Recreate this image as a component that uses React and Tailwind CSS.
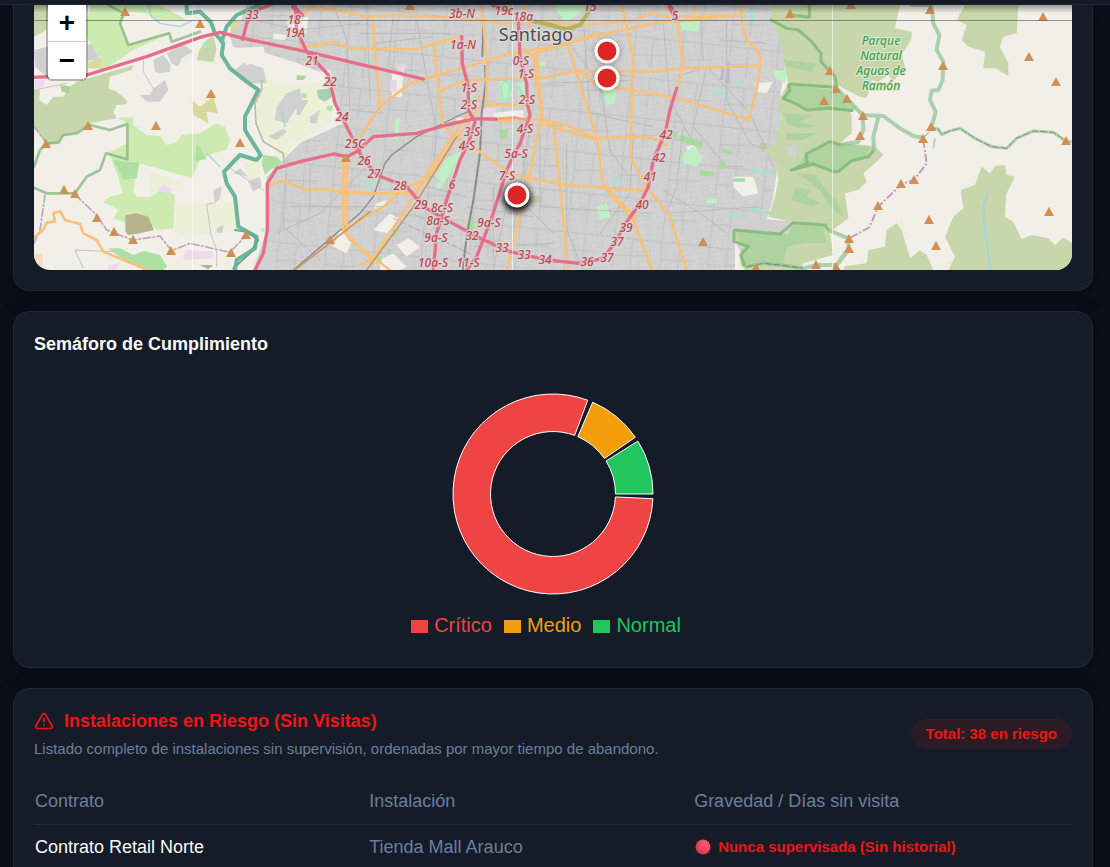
import { TriangleAlert } from "lucide-react";

const SLICES = [
  { name: "Normal", color: "#22c55e", from: 0, to: 31.9 },
  { name: "Medio", color: "#f59e0b", from: 34.6, to: 66.6 },
  { name: "Crítico", color: "#ef4444", from: 69.7, to: 357.3 },
];

const LEGEND = [
  { name: "Crítico", text: "text-[#ef4444]", box: "bg-[#ef4444]" },
  { name: "Medio", text: "text-[#f59e0b]", box: "bg-[#f59e0b]" },
  { name: "Normal", text: "text-[#22c55e]", box: "bg-[#22c55e]" },
];

const ROWS = [
  { contrato: "Contrato Retail Norte", instalacion: "Tienda Mall Arauco", gravedad: "Nunca supervisada (Sin historial)" },
];

// Motorway exit numbers: [text, x, y]
const EXITS = [
  ["33", 252, 15], ["18", 294, 20], ["19A", 295, 33], ["21", 312, 61], ["22", 330, 82],
  ["24", 342, 117], ["25C", 355, 144], ["26", 364, 161], ["27", 374, 174], ["28", 400, 186],
  ["29", 421, 205], ["8c-S", 442, 208], ["8a-S", 438, 221], ["9a-S", 436, 238], ["10a-S", 433, 263],
  ["11-S", 468, 263], ["32", 472, 236], ["9a-S", 489, 223], ["33", 502, 248], ["33", 524, 255],
  ["34", 545, 260], ["36", 587, 262], ["37", 607, 258], ["37", 617, 242], ["39", 626, 228],
  ["40", 642, 205], ["41", 650, 177], ["42", 659, 158], ["42", 666, 135], ["5", 675, 16],
  ["3b-N", 462, 14], ["1a-N", 463, 45], ["1-S", 469, 88], ["2-S", 469, 105], ["3-S", 472, 132],
  ["4-S", 467, 146], ["6", 452, 185], ["7-S", 507, 176], ["5a-S", 516, 154], ["4-S", 525, 129],
  ["2-S", 527, 100], ["1-S", 526, 74], ["0-S", 521, 61], ["18a", 523, 17], ["19c", 504, 11], ["15", 590, 7],
];

// Mountain peaks
const PEAKS = [
  [125, 12], [200, 24], [211, 94], [156, 126], [88, 126], [46, 144], [240, 143], [64, 190], [75, 194],
  [97, 218], [114, 232], [133, 240], [171, 251], [231, 253], [246, 235], [346, 158], [330, 240],
  [410, 6], [703, 242], [790, 14], [851, 5], [830, 71], [836, 89], [824, 101], [847, 99], [863, 116],
  [860, 136], [930, 10], [943, 66], [931, 127], [923, 139], [901, 184], [914, 180], [878, 206],
  [849, 239], [849, 249], [816, 265], [836, 267], [756, 268], [929, 220], [936, 246], [1043, 17],
  [1029, 57], [1056, 82], [1066, 141], [1049, 212],
];

const PINS = [
  [607, 51],
  [607, 78],
  [517, 195],
];

function point(radius, deg) {
  const a = (deg * Math.PI) / 180;
  return `${101 + radius * Math.cos(a)} ${101 - radius * Math.sin(a)}`;
}

function slicePath({ from, to }) {
  const large = to - from > 180 ? 1 : 0;
  return `M${point(100, from)} A100 100 0 ${large} 0 ${point(100, to)} L${point(62.5, to)} A62.5 62.5 0 ${large} 1 ${point(62.5, from)} Z`;
}

function LandWest() {
  return (
    <g>
      {/* woods and fields */}
      <path fill="#c8d7ab" d="M102 15H145L140 90L102 110Z M102 270L120 270L118 300L140 315L160 290L190 290L210 260L230 245L300 225L400 195L395 210L330 230L325 265L350 275L380 300L380 312L350 315L340 335L350 355L270 370L230 400L190 405L170 430L140 435L102 375Z" />
      <path fill="#c8d7ab" d="M590 180L598 150L620 120L640 105L650 150L640 187Z M690 100L700 60L740 65L735 100L715 128Z" />
      <path fill="#cdebb0" d="M250 90L275 15H480L560 60L540 85L510 100L400 150L320 205L298 208L275 140Z" />
      <path fill="#f2efe9" d="M372 45L395 35L440 40L470 60L560 60L585 80L560 110L510 120L505 95L385 135L362 70Z" />
      <path fill="#cdebb0" d="M350 353L400 352L400 375L440 405L480 408L500 435L530 425L545 405L600 400L650 370L675 380L690 420L680 450L640 460L600 480L575 535L545 525L400 485L340 482L320 460L382 430V370Z" />
      <path fill="#cdebb0" d="M335 480L415 490L400 575L410 590L450 592L470 575L500 570L525 585L520 685L470 690L430 645L380 640V670L340 655L355 630L310 605L330 590L370 580L350 520Z" />
      <path fill="#aedfa3" d="M340 480L418 488L410 535L370 540Z M590 430L600 440L620 478L585 482Z M325 745L360 745L400 765L430 753L480 765L502 800L490 810H430L370 780Z M785 270L815 265L825 305L795 310Z M790 465L830 470L850 490L810 510L795 525L785 490Z" />
      <path fill="#b5b38d" d="M376 645L410 640L445 650L462 690L420 700L385 705L376 695Z M600 795H640L625 808Z" />
      <path fill="#d8d99b" d="M575 300L600 320L640 290L655 340L620 335L625 370L580 345Z M265 185L310 178L295 205L265 205Z M690 75L735 68L730 105L700 125Z" />
      <path fill="#ecf0d6" d="M450 515L550 545L545 560L490 555L470 580L450 590Z M530 608L700 610L710 690L640 700L560 705L525 690Z M790 230L850 255L960 250L1000 330L990 370L880 430L850 480L810 430L770 390L770 300Z M730 490L790 460L780 530L750 545Z M760 790L800 740L850 790L850 810H760Z" />
      <path fill="#efd9ea" d="M555 750L640 755L635 775L550 780Z M325 795L360 790L350 810H325Z M470 570L490 555L520 570L500 580Z M105 240L135 240L130 262L105 265Z" />
      <path fill="#f8dcc0" d="M102 763H127V810H102Z" />
      <path fill="#9ccc85" opacity="0.8" d="M180 255L210 258L205 280L185 275Z M890 225L920 228L910 240H890Z" />

      {/* towns */}
      <path fill="#d0d0d0" d="M102 150L145 140V235L105 200Z M262 135L275 130L298 180L262 182Z M460 180L490 165L510 190L510 215L480 220L465 215Z M500 160L545 130L580 155L545 175L535 200L515 190Z M420 285L450 285L460 265L495 240L505 270L480 305L440 305Z M640 570L665 560L660 595L645 610Z M650 685L670 675L668 698H650Z M735 185L790 205L800 250L750 250L700 215Z" />
      <path fill="#d0d0d0" d="M860 280L900 265L905 300L860 370L825 360L830 320Z M805 410L850 385L860 395L830 420Z M890 300L925 300L900 345L890 345Z M930 350L960 330L950 370H930Z M700 520L720 505L745 530L720 525Z M745 545L780 530L785 560L760 575Z" />
      <path fill="#a9cfb2" d="M950 270L990 265L995 290L975 305L955 295Z" />
      <g fill="#9df0c0" opacity="0.7">
        <path d="M605 130L622 120L618 145Z M780 690L795 680L790 700Z M900 430L910 420L900 500H895Z M905 540H912V600H905Z M960 400L990 395L985 405H960Z" />
        <path d="M905 280H920V295H905Z M980 320L1000 315L995 335L980 330Z M1030 230L1040 235L1045 250L1030 245Z" fill="#8fe58a" />
      </g>
    </g>
  );
}

function LandCity() {
  const city =
    "M740 15H2312L2340 100L2355 200L2340 290L2365 400L2335 460L2330 520L2318 600L2300 660L2380 665L2360 702L2205 690V810H760L800 690V530L830 500L870 460L900 430L1030 370L1010 310L985 250L960 215L880 185L800 160L700 140L690 110L720 70Z";
  return (
    <g>
      <path fill="#d2d2d2" d={city} />
      <path fill="url(#streets)" d={city} />
      <path fill="url(#avenues)" d={city} />

      {/* industrial and open ground */}
      <g fill="#f2efe9">
        <path d="M860 60L925 50L920 100L870 105Z M690 145L790 140L800 180L740 195Z M820 100L860 105L855 120L820 118Z M960 215L990 210L1000 240L975 245Z" />
        <path d="M1020 690L1060 715L1040 760L1000 740Z M1120 690L1170 640L1200 660L1160 700Z M1190 735L1225 715L1260 740L1220 770Z M1140 780L1180 760L1220 800L1200 810H1140Z M1175 210L1210 215L1205 290H1175Z" />
        <path d="M1365 355L1475 352L1470 340L1570 330L1570 358L1480 360L1380 370Z M2200 530L2260 530L2275 580L2230 590L2200 560Z M2265 250L2318 245L2300 280L2270 275Z M1130 610L1160 600L1150 625H1120Z M2060 440L2080 430L2090 450L2070 465Z" />
      </g>
      <path fill="#e9d6e5" d="M1448 325L1490 322L1480 350L1445 352Z M1190 195L1215 190V215L1190 212Z M1170 240H1190V275H1170Z" />

      {/* parks */}
      <g fill="#bff0c4">
        <path d="M1665 15H1770L1730 45L1700 65L1670 35Z M1345 470L1385 455L1350 520L1330 550L1305 530Z M1315 545L1330 550L1320 570H1305Z M1810 265L1850 260L1845 310L1820 315Z M1790 620L1820 610L1830 650L1800 660Z" />
        <path d="M1500 245L1530 240L1535 290L1510 305L1500 280Z M1550 250L1570 245L1580 290L1560 300Z M2050 460L2080 440L2110 470L2090 500L2050 490Z M2040 70L2100 60L2095 95L2045 90Z M1370 480L1390 465L1375 500L1350 540Z" />
        <path d="M1185 360L1200 350L1195 420H1185Z M2120 600L2150 595V610H2120Z M2320 210L2365 210L2355 250L2325 235Z M2340 350L2370 350L2365 385L2345 380Z M1400 290L1415 285L1410 310H1400Z M1440 120L1460 130L1450 145Z M1620 185H1635V200H1620Z" />
      </g>
      <g fill="#a7dc9c">
        <path d="M2000 390L2035 395L2025 415L2000 408Z M2040 405L2110 425L2105 445L2040 425Z M2100 510L2140 515V530L2100 525Z M2165 445L2200 455L2195 465L2165 455Z M2160 480L2175 485L2170 510L2160 505Z M2200 535H2235V545H2200Z M1500 390L1525 385L1520 415L1500 418Z" />
        <path d="M1130 770H1145V790H1130Z M1180 690L1195 700L1185 715L1175 705Z M1160 745L1175 750L1165 765Z M1400 670L1420 650L1425 685L1400 690Z" />
      </g>
      <g fill="none" stroke="#9fe8c8" strokeWidth="7">
        <path d="M1504 260Q1520 225 1530 260L1525 300H1508Z M1555 258L1568 285 M2230 35L2260 32V60H2232Z M2180 640L2230 655 M2250 625L2310 640 M2140 280L2190 290 M2210 240L2225 250 M2250 510L2320 520 M1860 520L1840 560L1810 580 M985 250L1010 270 M1090 560L1120 550 M1100 180L1120 190" />
      </g>
      <path fill="#b8b8cf" d="M2180 190L2190 188L2188 250L2175 250Z M2165 205L2172 205L2170 240H2160Z" />
      <path fill="#c3c4a8" d="M1580 590L1625 585L1630 605L1590 612Z M2280 430L2300 430V455L2285 455Z" />

      {/* secondary streets */}
      <g fill="none" stroke="#bcbcbc" strokeWidth="3">
        <path d="M760 60L900 90L1080 70 M1000 15L1040 120L1050 330L1150 340 M1080 100H1350 M1100 15L1110 300 M1180 40L1165 200L1280 250 M830 700L960 640L1100 500 M860 520L850 680L960 780 M930 490V640 M870 620H1150 M1250 60L1310 400L1300 500 M1560 360L1580 620L1660 700" />
        <path d="M1700 120L1800 250L1830 450L1880 520 M1640 250L1900 240 M1750 60L1770 340L1960 380 M1700 430L1700 690L1750 810 M1620 620L1960 640 M1900 400L1890 580L1800 700 M1990 70L2010 300L2080 430 M2050 380L2030 560L2000 640L2280 620 M2120 200L2080 380L2180 500L2230 500 M2180 60V300L2250 430L2340 470" />
        <path d="M2030 230L2120 200L2250 340L2320 500 M1990 570L2100 640L2180 700 M1400 620L1600 650 M1420 740L1660 730 M1480 560V780 M1530 560L1480 810 M1590 380L1540 700 M1620 400V620 M1280 560L1400 590 M1240 640L1350 700 M1120 130L1300 110 M2160 120L2300 130 M2100 40L2110 180" />
      </g>
      <g fill="none" stroke="#8b8b8b" strokeWidth="4">
        <path d="M1445 15L1450 65L1447 170 M1455 195L1457 250L1445 340L1440 460L1420 600L1400 710L1388 810" strokeWidth="6" />
        <path d="M1430 325L1380 345L1250 410L1175 465L1155 490L1120 590L1080 640L880 810" />
      </g>
      <path fill="none" stroke="#b9a3b9" strokeWidth="3" strokeDasharray="18 6" d="M1180 655L1300 710L1420 765" />
    </g>
  );
}

function LandEast() {
  return (
    <g transform="translate(2160 0)">
      <path fill="#c8d7ab" d="M150 15H540L525 85L575 95V115L545 165L555 200L520 245L505 225L475 245L455 240L440 295L420 290L350 255L370 290L395 345L395 400L360 430L465 438L490 465L465 490L430 520L440 545L415 570L375 580L385 655L330 695L340 765L250 790L240 810H75L60 790V745L45 720L40 690L200 702L215 665L145 650L165 590L175 540L170 490L130 450L165 430L185 350L170 310L205 250L195 200L175 100L150 60Z" />
      <path fill="#c8d7ab" d="M375 798L440 790L445 750L495 740L500 690L530 670L545 690L570 775L600 750L620 765L640 810H370Z M685 810L705 770L690 740L675 710L700 650L730 625L722 570L765 555L785 500L810 520L825 498L855 495L860 525L885 530L858 585L855 650L880 665L905 718L935 705L985 715L1005 735L1030 712L1056 730V810Z" />
      <path fill="#c8d7ab" d="M735 15H895L890 100L850 110L840 140L865 190V228L825 205L790 205L795 155L745 140L725 120L740 75L710 60Z" />

      {/* scrub */}
      <g fill="#a9d29c">
        <path d="M205 255L340 270L410 325L395 335L260 325L190 295Z M250 470L330 425L450 440L440 465L390 490L350 515L270 490L215 512L240 490Z M50 690L190 705L225 670L310 680L320 730L250 730L200 740L190 790L100 785L65 800V745Z" opacity="0.8" />
        <path d="M190 180L290 190L275 215L200 200Z M225 560L270 570L260 590L300 610L275 620L215 600Z M230 520L290 525L310 560L350 600L370 650L330 620L300 570Z M190 340L280 345L240 365L290 380L240 385L200 370Z M200 400L290 400L250 420H200Z" opacity="0.8" />
      </g>
      <path fill="#d0d0d0" d="M190 440L232 432L225 475Z M50 735L80 740L60 750Z M40 650L220 665L205 702L40 685Z" />

      {/* park limits */}
      <g fill="none" stroke="#7ab873" strokeWidth="9" strokeLinejoin="round" opacity="0.8">
        <path d="M150 58L200 85L235 90L275 125L303 160V185L345 230L350 262 M205 252L350 262 M205 252L210 270L190 295L235 315L260 330L330 325L400 332" />
        <path d="M210 512L262 490L258 462L330 425L362 435 M210 512L280 492L340 515H355L395 482L445 470L462 450 M42 690V725L85 740L62 765L75 800 M42 690L180 702L220 668L315 675L325 690" />
        <path d="M268 15V52L215 45" />
      </g>
      <g fill="none" stroke="#8fc393" strokeWidth="12" strokeLinejoin="round" opacity="0.7">
        <path d="M350 265L380 295L428 345L490 348L540 385L580 408L610 413 M635 15L640 70L658 105L650 150L670 185L668 240L655 270L635 272L630 300L647 335L635 382 M570 15H640" />
        <path d="M428 345L430 390L415 425L362 435 M475 350L460 410L462 450 M325 690L385 715V750L355 790" />
        <path d="M75 800L130 790L180 795L250 805L290 795H350L385 745" />
      </g>
      <path fill="none" stroke="#8fc393" strokeWidth="10" strokeLinejoin="round" opacity="0.6" d="M640 385L655 388L665 403L690 393L720 385L765 415L815 440L860 445L890 415L940 393L1000 397L1040 425H1056" />
      <path fill="none" stroke="#62725f" strokeWidth="3" strokeDasharray="22 5" opacity="0.7" d="M610 413L640 385L655 388L665 403L690 393L720 385L765 415L815 440L860 445L890 415L940 393L1000 397L1040 425 M80 800L130 790L180 795L250 805" />
      <path fill="none" stroke="#bca0c0" strokeWidth="6" strokeDasharray="24 6 6 6" d="M610 420L620 490L582 540L545 552L475 620L448 682L388 715" />
      <path fill="none" stroke="#a9d3de" strokeWidth="6" d="M805 572L790 620L795 690L812 810 M645 415L640 445" />
    </g>
  );
}

function Roads() {
  return (
    <g fill="none" strokeLinejoin="round" strokeLinecap="round">
      {/* rivers and boundaries on the west side */}
      <path stroke="#a9d3de" strokeWidth="4" d="M445 15L455 50L480 70L540 80L580 60 M620 460L635 475L660 500 M845 330L855 380" />
      <g stroke="#87ba80" strokeWidth="8" opacity="0.8">
        <path d="M325 15L372 40L360 70L385 135L508 100L515 125L600 95 M102 500L120 450L140 430L175 428L190 405L230 400L270 375L330 390L382 372V478L318 460L300 510L260 530L225 580L140 580L102 563" />
      </g>
      <path stroke="#5eae93" strokeWidth="12" opacity="0.9" d="M560 15V40L600 35L632 65L645 100L670 130L665 165L690 205L740 245L775 270L755 310L735 350V390L760 430L782 465L770 480L720 465L672 515L680 550L705 590L715 680L770 710L765 745L710 780L705 810 M665 125L680 80L710 45L780 15" />
      <path stroke="#5eae93" strokeWidth="6" d="M705 690L740 695L775 720L750 760L700 805" />
      <path stroke="#bba6bd" strokeWidth="5" strokeDasharray="22 8 5 8" d="M102 380L140 430 M102 730L120 690L135 585 M225 585L285 640L320 690L398 720L480 708L515 752L570 730L690 757L740 705" />
      <path stroke="#bfbab3" strokeWidth="5" d="M785 240V270L765 310L768 370L790 425L850 460L852 490" />
      <path stroke="#c4c4c8" strokeWidth="3" d="M430 175V215L465 275 M102 270L200 250 M640 610L620 612L632 700L650 750V800 M345 755L225 750L250 805 M690 505L790 570" />

      {/* main roads */}
      <g stroke="#f8c27c" strokeWidth="8">
        <path d="M102 712L130 690L140 668L165 665L160 640L180 633L195 660L240 672L250 700L290 720L310 755L420 800L450 812" />
        <path d="M800 558L850 543L920 570L960 567L1110 580 M1000 575L1030 580H1240L1265 545L1440 290 M1030 480V690 M1042 470L1040 690 M890 145L1000 127L1050 145L1250 148L1310 130L1380 110 M915 40L930 20L1030 35L1100 50L1200 45L1440 60L1500 70L1640 65L1750 75L1900 62L1950 40L2000 50L2220 45" />
        <path d="M1030 690L1150 620L1220 560L1265 545 M1030 690L1110 775 M1030 690L1050 720L1170 810 M1080 795L1110 780 M1110 790L1260 560L1360 430L1440 320" />
        <path d="M1118 60L1125 150L1140 320 M1080 410L1100 380L1140 320L1230 250L1400 200L1530 160L1660 140L1780 110L1960 70L2220 45 M1302 130L1315 270L1330 380L1400 430L1440 455L1530 520L1680 553L1930 572 M1318 275L1400 240L1480 238L1620 235L1720 215H1960L2045 205L2280 198" />
        <path d="M1445 15L1460 180V315H1580 M1570 15L1590 80 M1575 150L1600 170L1625 350L1580 560L1550 690L1520 810 M1610 165L1628 365 M1590 165L1690 135L1790 100 M1500 355L1640 362L1700 375L1785 415L1900 410L1960 415L2000 435" />
        <path d="M1660 365L1680 560L1705 810 M1705 140L1730 220L1790 410L1810 560L1900 660L1955 810 M1735 210L1790 255L1960 280L2050 300L2250 360 M1865 15L1880 80L1900 180L1890 470L1940 560L2010 650L2060 810 M1815 560L1910 655" />
        <path d="M1995 15L2030 60L2050 200L2030 270 M2085 15L2080 60 M2225 15V60L2240 120L2280 160V200L2270 270L2245 360 M1630 372L1790 420 M1480 360L1530 365" />
      </g>
      <path stroke="#c8996a" strokeWidth="5" d="M885 810L1110 635 M1100 810L1240 620L1370 410" />
      <path stroke="#b5b35c" strokeWidth="13" d="M1590 62L1640 72L1700 88L1740 75L1760 45L1770 25" />

      {/* motorways */}
      <g stroke="#e66e89" strokeWidth="10">
        <path d="M102 232L260 225L440 170L600 112L660 97L730 115L920 155L1120 202L1270 237" />
        <path d="M728 118L740 70L760 35L820 10 M885 15L890 90L920 155L985 225L1005 310L1065 430L1085 470L1130 525L1220 560L1270 620L1330 655L1440 715L1530 755L1640 780L1740 790L1810 775L1850 720L1870 680L1920 610L1945 560L1960 480L1995 400L2010 330L2030 265" />
        <path d="M1075 450L1120 410L1250 400L1340 375L1420 357L1490 357 M765 810L790 760L802 690V550L830 505L900 485L1000 462L1040 470L1080 450" />
        <path d="M1385 110L1387 190L1405 260V330L1425 365L1405 430L1380 480L1340 600L1310 700L1300 810 M1555 60L1560 170L1580 250L1582 310L1590 345L1560 430L1520 510L1480 640L1430 770L1400 810" />
        <path d="M2010 20L2028 55 M1480 15L1530 40 M880 20L905 45" strokeWidth="14" />
      </g>
      <path stroke="#f3a27d" strokeWidth="8" d="M1500 356L1545 352L1580 360" />
    </g>
  );
}

function MapDrawing() {
  return (
    <svg
      viewBox="34 5 1038 265"
      preserveAspectRatio="xMidYMid slice"
      className="block h-[265px] w-full"
      role="img"
      aria-label="Mapa de Santiago"
    >
      <defs>
        <pattern id="streets" width="37" height="31" patternUnits="userSpaceOnUse" patternTransform="rotate(-8)">
          <path d="M0 8H37M12 0V31M26 8V31M0 22H26" stroke="#c9c9c9" strokeWidth="2" fill="none" />
        </pattern>
        <pattern id="avenues" width="143" height="121" patternUnits="userSpaceOnUse" patternTransform="rotate(6)">
          <path d="M0 30H143M50 0V121M50 85L143 78M104 30V121" stroke="#c1c1c1" strokeWidth="3" fill="none" />
        </pattern>
        <filter id="pinShadow" x="-60%" y="-60%" width="220%" height="220%">
          <feGaussianBlur stdDeviation="3" />
        </filter>
        <linearGradient id="topShade" x1="0" y1="0" x2="0" y2="1">
          <stop offset="0" stopColor="#000" stopOpacity="0.35" />
          <stop offset="1" stopColor="#000" stopOpacity="0" />
        </linearGradient>
      </defs>

      <rect x="34" y="5" width="1038" height="265" fill="#f2efe9" />
      <g transform="scale(0.333333)">
        <LandWest />
        <LandCity />
        <LandEast />
        <Roads />
      </g>

      {PEAKS.map(([x, y]) => (
        <path key={`${x}-${y}`} d={`M${x - 5} ${y + 4}H${x + 5}L${x} ${y - 5}Z`} fill="#d08f55" />
      ))}

      {/* tile seams */}
      <path d="M192.5 5V270M512.5 5V270M832.5 5V270" stroke="#fff" strokeOpacity="0.6" />
      <path d="M34 20.5H1072" stroke="#555" strokeOpacity="0.6" />

      <g
        className="font-['Noto_Sans'] text-[12px] font-medium italic"
        fill="#b8484f"
        stroke="#ddd6d6"
        strokeWidth="3"
        strokeOpacity="0.7"
        paintOrder="stroke"
        textAnchor="middle"
      >
        {EXITS.map(([label, x, y]) => (
          <text key={`${label}-${x}-${y}`} x={x} y={y + 4}>
            {label}
          </text>
        ))}
      </g>
      <text
        x="536"
        y="41"
        textAnchor="middle"
        className="font-['Noto_Sans'] text-[18px]"
        fill="#4c4c4c"
        stroke="#dedede"
        strokeWidth="2"
        paintOrder="stroke"
      >
        Santiago
      </text>
      <g
        className="font-['Noto_Sans'] text-[12px] font-medium italic"
        fill="#45a04c"
        stroke="#dfe8cf"
        strokeWidth="2"
        paintOrder="stroke"
        textAnchor="middle"
      >
        <text x="881" y="45">Parque</text>
        <text x="881" y="60">Natural</text>
        <text x="881" y="75">Aguas de</text>
        <text x="881" y="90">Ramón</text>
      </g>

      <circle cx="517" cy="198" r="14" fill="#000" opacity="0.9" filter="url(#pinShadow)" />
      {PINS.map(([x, y]) => (
        <g key={`${x}-${y}`}>
          <circle cx={x} cy={y + 1} r="13" fill="#000" opacity="0.25" filter="url(#pinShadow)" />
          <circle cx={x} cy={y} r="11" fill="#dc2626" stroke="#fff" strokeWidth="3" />
        </g>
      ))}

      <rect x="34" y="5" width="1038" height="8" fill="url(#topShade)" />
    </svg>
  );
}

function MapCard() {
  return (
    <section className="rounded-b-2xl border border-t-0 border-[#1f2937] bg-[#151c28] px-5 pb-5 shadow-[0_4px_20px_rgba(0,0,0,0.25)]">
      <div className="relative overflow-hidden rounded-b-2xl">
        <MapDrawing />
        <div className="absolute top-0 left-3 flex w-[42px] flex-col rounded-b-md border-2 border-t-0 border-black/25 bg-white bg-clip-padding">
          <button
            type="button"
            aria-label="Acercar"
            className="flex h-[37px] items-center justify-center border-b border-[#ccc] text-[28px] leading-none font-bold text-black"
          >
            +
          </button>
          <button
            type="button"
            aria-label="Alejar"
            className="flex h-[37px] items-center justify-center text-[28px] leading-none font-bold text-black"
          >
            &minus;
          </button>
        </div>
      </div>
    </section>
  );
}

function ComplianceCard() {
  return (
    <section className="rounded-2xl border border-[#1f2937] bg-[#151c28] px-5 pt-5 pb-7 shadow-[0_4px_20px_rgba(0,0,0,0.25)]">
      <h2 className="text-[18px] leading-6 font-bold text-[#f8fafc]">Semáforo de Cumplimiento</h2>
      <svg viewBox="0 0 202 202" className="mx-auto mt-[37px] block size-[202px]" role="img" aria-label="Semáforo de Cumplimiento">
        {SLICES.map((slice) => (
          <path key={slice.name} d={slicePath(slice)} fill={slice.color} stroke="#fff" strokeWidth="1" />
        ))}
      </svg>
      <ul className="mt-4 mr-[14px] flex justify-center gap-3 text-[20px] leading-7">
        {LEGEND.map((item) => (
          <li key={item.name} className={`flex items-center gap-[6px] ${item.text}`}>
            <span className={`mt-[3px] h-[13px] w-[17px] ${item.box}`} />
            {item.name}
          </li>
        ))}
      </ul>
    </section>
  );
}

function RedDot() {
  return (
    <svg viewBox="0 0 16 16" className="size-4 shrink-0" aria-hidden="true">
      <defs>
        <radialGradient id="dot" cx="0.65" cy="0.35" r="0.7">
          <stop offset="0" stopColor="#ff5d7c" />
          <stop offset="0.6" stopColor="#ee4358" />
          <stop offset="1" stopColor="#c4384a" />
        </radialGradient>
      </defs>
      <circle cx="8" cy="8" r="7.5" fill="url(#dot)" />
    </svg>
  );
}

function RiskCard() {
  return (
    <section className="rounded-2xl border border-[#1f2937] bg-[#151c28] p-5 shadow-[0_4px_20px_rgba(0,0,0,0.25)]">
      <div className="flex items-center justify-between gap-4">
        <div>
          <h2 className="flex items-center gap-[10px] text-[18px] leading-6 font-bold text-[#ef1515]">
            <TriangleAlert className="size-5" strokeWidth={2} />
            Instalaciones en Riesgo (Sin Visitas)
          </h2>
          <p className="mt-[6px] text-[15px] leading-5 text-[#6a7f9e]">
            Listado completo de instalaciones sin supervisión, ordenadas por mayor tiempo de abandono.
          </p>
        </div>
        <span className="rounded-full bg-[#ef1515]/10 px-[15px] py-[5px] text-[15px] leading-5 font-bold whitespace-nowrap text-[#ef1515]">
          Total: 38 en riesgo
        </span>
      </div>

      <table className="mt-[22px] w-full table-fixed text-left text-[18px] leading-6">
        <thead>
          <tr className="border-b border-[#1f2937] text-[#6a7f9e]">
            <th className="w-[32.2%] px-px pt-2 pb-[11px] font-normal">Contrato</th>
            <th className="w-[31.3%] px-px pt-2 pb-[11px] font-normal">Instalación</th>
            <th className="px-px pt-2 pb-[11px] font-normal">Gravedad / Días sin visita</th>
          </tr>
        </thead>
        <tbody>
          {ROWS.map((row) => (
            <tr key={row.contrato} className="border-b border-[#1f2937]">
              <td className="px-px py-[10px] text-[#f8fafc]">{row.contrato}</td>
              <td className="px-px py-[10px] text-[#6a7f9e]">{row.instalacion}</td>
              <td className="px-[2px] py-[10px] text-[15px] font-bold text-[#ef1515]">
                <span className="flex items-center gap-[7px]">
                  <RedDot />
                  {row.gravedad}
                </span>
              </td>
            </tr>
          ))}
        </tbody>
      </table>
    </section>
  );
}

export default function App() {
  return (
    <div className="h-screen overflow-hidden bg-[#0a0f1a] font-['Liberation_Sans',Arial,sans-serif]">
      <header className="h-[5px] border-b border-[#1f2937] bg-[#151c28]" />
      <main className="flex flex-col gap-5 pr-[17px] pl-[13px]">
        <MapCard />
        <ComplianceCard />
        <RiskCard />
      </main>
    </div>
  );
}
